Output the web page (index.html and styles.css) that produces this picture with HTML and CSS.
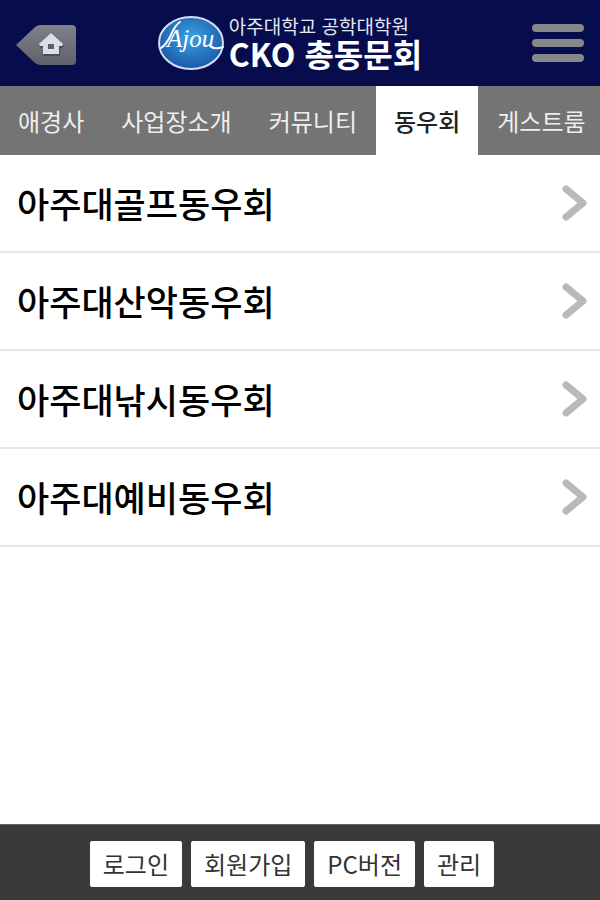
FILE: index.html
```html
<!DOCTYPE html>
<html lang="ko">
<head>
    <meta charset="UTF-8">
    <meta name="viewport" content="width=device-width, initial-scale=1.0">
    <title>CKO 총동문회</title>
    <link rel="stylesheet" href="styles.css">
</head>
<body>
    <header class="header">
        <a href="#" class="home-link" aria-label="홈">
            <svg width="61" height="44" viewBox="0 0 61 44">
                <defs>
                    <linearGradient id="homeBg" x1="0" y1="0" x2="0" y2="1">
                        <stop offset="0" stop-color="#7f8188"/>
                        <stop offset="1" stop-color="#5f616c"/>
                    </linearGradient>
                </defs>
                <path d="M0 24 L18 7 Q21 4 24 4 H56 Q60 4 60 8 V40 Q60 44 56 44 H24 Q21 44 18 41 Z" fill="url(#homeBg)"/>
                <path d="M35 14 L48 25 L46 27 H44 V35 H27 V27 H25 L23 25 Z" fill="#4c4e5a"/>
                <path d="M35 12 L47 23 L46 25 H43 V33 H27 V25 H24 L23 23 Z" fill="#dcdde6"/>
                <rect x="32" y="23" width="6" height="5" fill="#5c5e68"/>
            </svg>
        </a>
        <a href="#" class="logo">
            <svg width="67" height="56" viewBox="0 0 67 56" aria-hidden="true">
                <defs>
                    <radialGradient id="logoBg" cx="0.5" cy="0.4" r="0.6">
                        <stop offset="0" stop-color="#38a3e0"/>
                        <stop offset="1" stop-color="#1b58aa"/>
                    </radialGradient>
                </defs>
                <ellipse cx="33" cy="28" rx="32" ry="26" fill="url(#logoBg)" stroke="#d5dcf0" stroke-width="2"/>
                <path d="M3 33 Q8 30 13 20 Q17 10 22 7" fill="none" stroke="#fff" stroke-width="2" stroke-linecap="round"/>
                <text class="logo-mark" x="9" y="32">Ajou</text>
                <path d="M52 31 Q56 35 65 32" fill="none" stroke="#fff" stroke-width="2" stroke-linecap="round"/>
            </svg>
            <span class="logo-text">
                <span class="logo-sub">아주대학교 공학대학원</span>
                <span class="logo-title">CKO 총동문회</span>
            </span>
        </a>
        <button type="button" class="menu-btn" aria-label="메뉴">
            <span></span>
            <span></span>
            <span></span>
        </button>
    </header>

    <nav class="tabs">
        <a href="#">애경사</a>
        <a href="#">사업장소개</a>
        <a href="#">커뮤니티</a>
        <a href="#" class="active">동우회</a>
        <a href="#">게스트룸</a>
    </nav>

    <main class="content">
        <ul class="club-list">
            <li>
                <a href="#">아주대골프동우회
                    <svg class="arrow" width="26" height="36" viewBox="0 0 26 36"><path d="M4 4 L21 18 L4 32"/></svg>
                </a>
            </li>
            <li>
                <a href="#">아주대산악동우회
                    <svg class="arrow" width="26" height="36" viewBox="0 0 26 36"><path d="M4 4 L21 18 L4 32"/></svg>
                </a>
            </li>
            <li>
                <a href="#">아주대낚시동우회
                    <svg class="arrow" width="26" height="36" viewBox="0 0 26 36"><path d="M4 4 L21 18 L4 32"/></svg>
                </a>
            </li>
            <li>
                <a href="#">아주대예비동우회
                    <svg class="arrow" width="26" height="36" viewBox="0 0 26 36"><path d="M4 4 L21 18 L4 32"/></svg>
                </a>
            </li>
        </ul>
    </main>

    <footer class="footer">
        <a href="#">로그인</a>
        <a href="#">회원가입</a>
        <a href="#">PC버전</a>
        <a href="#">관리</a>
    </footer>
</body>
</html>
```
FILE: styles.css
```css
* {
    box-sizing: border-box;
}

body {
    margin: 0;
    min-height: 100vh;
    display: flex;
    flex-direction: column;
    font-family: "Noto Sans CJK KR", sans-serif;
    background-color: #fff;
    color: #000;
}

a {
    color: inherit;
    text-decoration: none;
}

/* header */
.header {
    display: grid;
    grid-template-columns: 1fr auto 1fr;
    align-items: center;
    padding: 15px 16px;
    background-color: #070c4d;
}

.home-link svg,
.logo svg {
    display: block;
}

.logo {
    display: flex;
    align-items: center;
    gap: 4px;
    padding-right: 20px;
    color: #fff;
}

.logo-mark {
    font-family: "Liberation Serif", serif;
    font-size: 25px;
    font-style: italic;
    fill: #fff;
}

.logo-text {
    display: flex;
    flex-direction: column;
    padding-bottom: 2px;
    white-space: nowrap;
}

.logo-sub {
    font-size: 19px;
    line-height: 22px;
    color: #e4e6f2;
}

.logo-title {
    font-size: 32px;
    font-weight: 700;
    line-height: 32px;
}

.menu-btn {
    justify-self: end;
    display: flex;
    flex-direction: column;
    gap: 7px;
    width: 52px;
    padding: 0;
    border: none;
    background: none;
    cursor: pointer;
}

.menu-btn span {
    height: 8px;
    border-radius: 4px;
    background-color: #85878a;
}

/* tabs */
.tabs {
    display: flex;
    overflow: hidden;
    background-color: #747474;
}

.tabs a {
    flex: none;
    padding: 0 18px;
    border-right: 1px solid #747474;
    font-size: 24px;
    line-height: 69px;
    color: #eee;
    white-space: nowrap;
}

.tabs a.active {
    background-color: #fff;
    color: #222;
    font-weight: 500;
}

/* list */
.content {
    flex: 1;
}

.club-list {
    margin: 0;
    padding: 0;
    list-style: none;
}

.club-list a {
    display: flex;
    justify-content: space-between;
    align-items: center;
    padding: 0 12px 0 17px;
    border-bottom: 2px solid #e6e6e6;
    font-size: 35px;
    font-weight: 500;
    line-height: 96px;
}

.arrow {
    fill: none;
    stroke: #b9b9b9;
    stroke-width: 7;
    stroke-linecap: round;
    stroke-linejoin: round;
}

/* footer */
.footer {
    display: flex;
    justify-content: center;
    gap: 9px;
    padding: 16px 16px 13px 0;
    border-top: 1px solid #666;
    background-color: #3a3a3a;
}

.footer a {
    padding: 0 13px;
    border-radius: 2px;
    background-color: #fff;
    font-size: 24px;
    line-height: 46px;
    color: #333;
}
```
